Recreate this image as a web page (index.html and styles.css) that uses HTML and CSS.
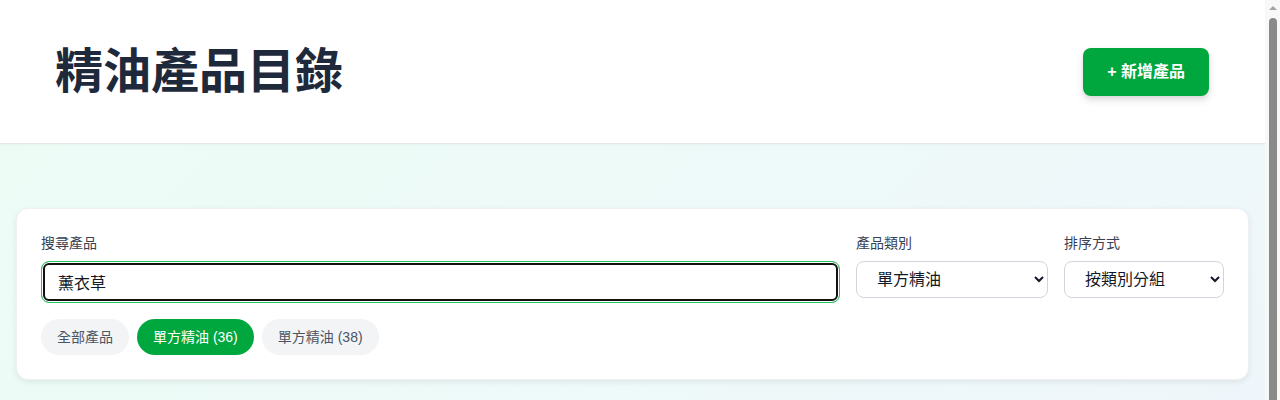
FILE: index.html
```html
<!DOCTYPE html>
<html lang="zh-Hant">
<head>
<meta charset="utf-8">
<title>精油產品目錄</title>
<link rel="stylesheet" href="styles.css">
</head>
<body>
<div class="page">
  <header class="topbar">
    <h1 class="title">精油產品目錄</h1>
    <button class="add-btn" type="button">+ 新增產品</button>
  </header>
  <main class="main">
    <section class="filter-card">
      <div class="filter-grid">
        <div class="field">
          <label class="field-label" for="q">搜尋產品</label>
          <input id="q" class="search-input" type="text" value="薰衣草">
        </div>
        <div class="field">
          <label class="field-label" for="cat">產品類別</label>
          <select id="cat" class="select">
            <option>單方精油</option>
            <option>複方精油</option>
          </select>
        </div>
        <div class="field">
          <label class="field-label" for="sort">排序方式</label>
          <select id="sort" class="select">
            <option>按類別分組</option>
            <option>按名稱排序</option>
          </select>
        </div>
      </div>
      <div class="chips">
        <button class="chip" type="button">全部產品</button>
        <button class="chip chip-active" type="button">單方精油 (36)</button>
        <button class="chip" type="button">單方精油 (38)</button>
      </div>
    </section>
  </main>
</div>
<div class="scrollbar" aria-hidden="true">
  <div class="scroll-arrow"></div>
  <div class="scroll-thumb"></div>
</div>
</body>
</html>
```

FILE: styles.css
```css
* { box-sizing: border-box; }
html, body { margin: 0; padding: 0; }
body {
  font-family: "Liberation Sans", "Noto Sans CJK TC", sans-serif;
  color: #1f2937;
  background: #ffffff;
}
.page {
  width: 1265px;
  min-height: 420px;
  background: linear-gradient(135deg, #ecfdf5 0%, #eff6fb 100%);
}
.topbar {
  background: #ffffff;
  display: flex;
  align-items: center;
  justify-content: space-between;
  padding: 48px 56px 47px 55px;
  border-bottom: 1px solid #e5e7eb;
  box-shadow: 0 1px 2px rgba(0,0,0,0.04);
}
.title {
  margin: 0;
  font-size: 48px;
  line-height: 48px;
  font-weight: 700;
  color: #1e293b;
}
.add-btn {
  font-family: inherit;
  font-size: 16px;
  line-height: 24px;
  font-weight: 700;
  color: #ffffff;
  background: #00a63e;
  border: none;
  border-radius: 8px;
  padding: 12px 24px;
  box-shadow: 0 4px 8px rgba(0,0,0,0.12), 0 2px 4px rgba(0,0,0,0.06);
}
.main {
  padding: 64px 16px 32px;
}
.filter-card {
  background: #ffffff;
  border: 1px solid #eef0f2;
  border-radius: 12px;
  padding: 24px;
  box-shadow: 0 2px 6px rgba(0,0,0,0.08);
}
.filter-grid {
  display: grid;
  grid-template-columns: 1fr 192px 160px;
  gap: 16px;
  align-items: start;
}
.field { display: flex; flex-direction: column; }
.field-label {
  font-size: 14px;
  line-height: 20px;
  color: #374151;
  margin-bottom: 8px;
}
.search-input {
  height: 42px;
  font-family: inherit;
  font-size: 16px;
  color: #111827;
  padding: 0 16px;
  border: 1px solid #22c55e;
  border-radius: 8px;
  outline: none;
  box-shadow: inset 0 0 0 1px #ffffff, inset 0 0 0 3px #111111;
  background: #ffffff;
}
.select {
  height: 37px;
  font-family: inherit;
  font-size: 16px;
  color: #111827;
  padding: 0 8px 0 16px;
  border: 1px solid #d1d5db;
  border-radius: 8px;
  background: #ffffff;
}
.chips {
  display: flex;
  gap: 8px;
  margin-top: 16px;
}
.chip {
  font-family: inherit;
  font-size: 14px;
  line-height: 20px;
  padding: 8px 16px;
  border: none;
  border-radius: 9999px;
  background: #f3f4f6;
  color: #4b5563;
}
.chip-active {
  background: #00a63e;
  color: #ffffff;
}
.scrollbar {
  position: fixed;
  top: 0;
  right: 0;
  width: 15px;
  height: 100vh;
  background: #f8f8f8;
  display: flex;
  flex-direction: column;
  align-items: center;
}
.scroll-arrow {
  margin-top: 6px;
  width: 0;
  height: 0;
  border-left: 4px solid transparent;
  border-right: 4px solid transparent;
  border-bottom: 4px solid #a3a3a3;
}
.scroll-thumb {
  margin-top: 8px;
  width: 8px;
  flex: 1;
  background: #8a8a8a;
  border-radius: 4px 4px 0 0;
}
```
